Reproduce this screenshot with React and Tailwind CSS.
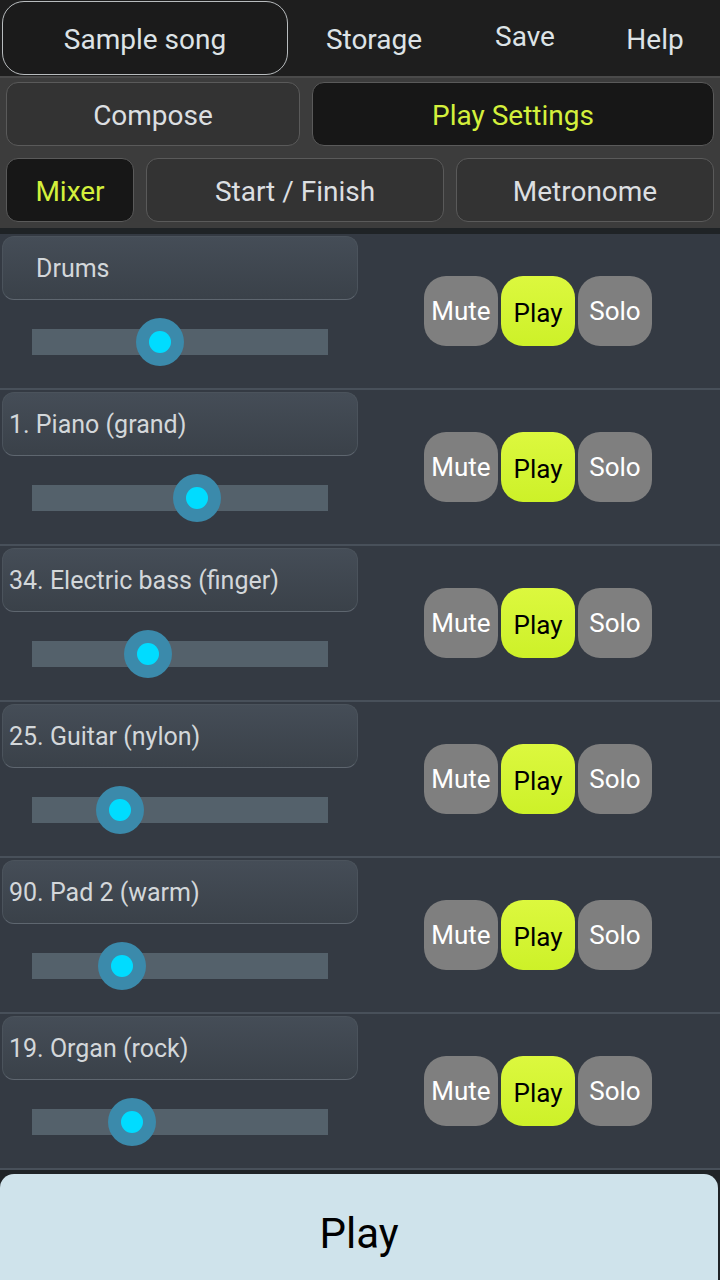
import React from 'react';

// Mixer screen of the song player: top menu, two tab rows, track list, Play bar.
const tracks = [
  { name: 'Drums', pos: 160, indent: true },
  { name: '1. Piano (grand)', pos: 197 },
  { name: '34. Electric bass (finger)', pos: 148 },
  { name: '25. Guitar (nylon)', pos: 120 },
  { name: '90. Pad 2 (warm)', pos: 122 },
  { name: '19. Organ (rock)', pos: 132 },
];

const font = { fontFamily: 'Roboto, "Noto Sans", sans-serif' };

function Tab({ label, active, className = '' }) {
  return (
    <div
      className={`flex h-[64px] items-center justify-center rounded-[12px] border border-[#5a5a5a] pt-[3px] text-[28px] ${
        active ? 'bg-[#171717] text-[#d4f03c]' : 'bg-[#333333] text-[#dcdfe1]'
      } ${className}`}
    >
      {label}
    </div>
  );
}

function TrackRow({ t }) {
  return (
    <div className="flex h-[156px] border-b-2 border-[#48505a] bg-[#343a43]">
      <div className="flex w-[360px] flex-col pl-[2px] pt-[2px]">
        <div
          className={`flex h-[64px] w-[356px] items-center rounded-[12px] border border-[#4b535c] border-b-[#5e666f] bg-gradient-to-b from-[#454d57] to-[#3a4149] pt-[2px] text-[25px] text-[#d3d7da] ${
            t.indent ? 'pl-[33px]' : 'pl-[6px]'
          }`}
        >
          {t.name}
        </div>
        <div className="relative ml-[30px] mt-[29px] h-[26px] w-[296px] bg-[#54616b]">
          <div
            className="absolute top-1/2 flex h-[48px] w-[48px] -translate-x-1/2 -translate-y-1/2 items-center justify-center rounded-full bg-[#3b8aab]"
            style={{ left: t.pos - 32 }}
          >
            <div className="h-[22px] w-[22px] rounded-full bg-[#00dcff]" />
          </div>
        </div>
      </div>
      <div className="flex flex-1 items-center pl-[64px]">
        <div className="flex gap-[3px]">
          <div className="flex h-[70px] w-[74px] items-center justify-center rounded-[22px] bg-[#7f7f7f] text-[26px] text-white">
            Mute
          </div>
          <div className="flex h-[70px] w-[74px] items-center justify-center rounded-[22px] bg-gradient-to-b from-[#dcf83e] to-[#cdf128] pt-[5px] text-[26px] text-black">
            Play
          </div>
          <div className="flex h-[70px] w-[74px] items-center justify-center rounded-[22px] bg-[#7f7f7f] pt-[1px] text-[26px] text-white">
            Solo
          </div>
        </div>
      </div>
    </div>
  );
}

export default function App() {
  return (
    <div className="flex h-[1280px] w-[720px] flex-col overflow-hidden bg-[#1f2326]" style={font}>
      {/* top menu */}
      <div className="flex h-[76px] items-center bg-[#1e1e1e] text-[28px] text-[#dde3e6]">
        <div className="ml-[2px] flex h-[74px] w-[286px] items-center justify-center rounded-[22px] border border-[#b8bcbe] bg-[#1b1b1b] pt-[4px]">
          Sample song
        </div>
        <div className="flex w-[172px] justify-center pt-[4px]">Storage</div>
        <div className="flex w-[130px] justify-center pb-[2px]">Save</div>
        <div className="flex w-[130px] justify-center pt-[4px]">Help</div>
      </div>

      {/* tab rows */}
      <div className="flex flex-col gap-[12px] border-t-2 border-[#4a4a4a] bg-[#3c3c3c] px-[6px] pb-[6px] pt-[4px]">
        <div className="flex gap-[12px]">
          <Tab label="Compose" className="w-[294px]" />
          <Tab label="Play Settings" active className="flex-1" />
        </div>
        <div className="flex gap-[12px]">
          <Tab label="Mixer" active className="w-[128px]" />
          <Tab label="Start / Finish" className="w-[298px]" />
          <Tab label="Metronome" className="flex-1" />
        </div>
      </div>

      {/* track list */}
      <div className="mt-[6px] flex flex-col">
        {tracks.map((t) => (
          <TrackRow key={t.name} t={t} />
        ))}
      </div>

      {/* play bar */}
      <div className="mt-[4px] mr-[2px] flex flex-1 items-center justify-center rounded-t-[14px] bg-[#cfe3eb] pt-[12px] text-[42px] text-black">
        Play
      </div>
    </div>
  );
}
